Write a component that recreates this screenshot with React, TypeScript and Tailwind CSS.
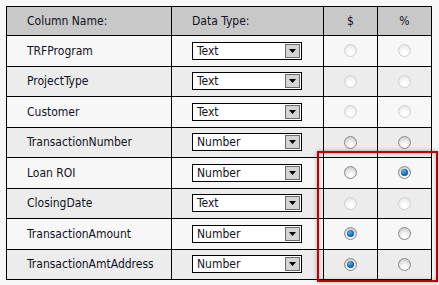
const rows = [
  { name: 'TRFProgram', type: 'Text', dollar: false, pct: false, disabled: true },
  { name: 'ProjectType', type: 'Text', dollar: false, pct: false, disabled: true },
  { name: 'Customer', type: 'Text', dollar: false, pct: false, disabled: true },
  { name: 'TransactionNumber', type: 'Number', dollar: false, pct: false, disabled: false },
  { name: 'Loan ROI', type: 'Number', dollar: false, pct: true, disabled: false },
  { name: 'ClosingDate', type: 'Text', dollar: false, pct: false, disabled: true },
  { name: 'TransactionAmount', type: 'Number', dollar: true, pct: false, disabled: false },
  { name: 'TransactionAmtAddress', type: 'Number', dollar: true, pct: false, disabled: false },
];

const Radio = ({ checked, disabled }: { checked: boolean; disabled: boolean }) => {
  if (disabled) {
    return (
      <span className="inline-flex w-[13px] h-[13px] rounded-full border border-[#d2d2d2] bg-[radial-gradient(circle_at_50%_70%,#ffffff_20%,#e2e2e2_90%)]" />
    );
  }
  return (
    <span className="inline-flex items-center justify-center w-[13px] h-[13px] rounded-full border border-[#8a8a8a] bg-[radial-gradient(circle_at_50%_75%,#ffffff_15%,#cdcdcd_85%)]">
      {checked && (
        <span className="w-[7px] h-[7px] rounded-full bg-[radial-gradient(circle_at_40%_35%,#5fb6ee_0%,#1b6db5_50%,#0b3c72_100%)]" />
      )}
    </span>
  );
};

const Select = ({ value }: { value: string }) => (
  <div className="flex items-center w-[110px] h-[18px] border border-black bg-white">
    <span className="flex-1 pl-[4px] leading-none">{value}</span>
    <span className="w-[15px] h-[14px] mr-[1px] flex items-center justify-center bg-[#d4d4d4] border border-[#6b6b6b]">
      <svg width="7" height="4" viewBox="0 0 7 4"><path d="M0 0h7L3.5 4z" fill="#000" /></svg>
    </span>
  </div>
);

export default function App() {
  return (
    <div className="relative w-[439px] h-[285px] bg-[#f7f7f7] pt-[6px] pl-[6px] text-[#111122] text-[12px]" style={{ fontFamily: '"DejaVu Sans Condensed", "DejaVu Sans", sans-serif' }}>
      <table className="border-collapse w-[425px] table-fixed">
        <colgroup>
          <col className="w-[165px]" />
          <col className="w-[152px]" />
          <col className="w-[54px]" />
          <col className="w-[54px]" />
        </colgroup>
        <thead>
          <tr className="h-[29px] bg-[#c8c8c8]">
            <th className="border border-black text-left font-normal pl-[20px]">Column Name:</th>
            <th className="border border-black text-left font-normal pl-[20px]">Data Type:</th>
            <th className="border border-black font-normal">$</th>
            <th className="border border-black font-normal">%</th>
          </tr>
        </thead>
        <tbody>
          {rows.map((r, i) => (
            <tr key={r.name} className={i % 2 === 0 ? 'h-[30.5px] bg-[#f7f7f7]' : 'h-[30.5px] bg-[#ececec]'}>
              <td className="border border-black pl-[20px]">{r.name}</td>
              <td className="border border-black pl-[20px]"><Select value={r.type} /></td>
              <td className="border border-black text-center align-middle"><div className="flex justify-center"><Radio checked={r.dollar} disabled={r.disabled} /></div></td>
              <td className="border border-black text-center align-middle"><div className="flex justify-center"><Radio checked={r.pct} disabled={r.disabled} /></div></td>
            </tr>
          ))}
        </tbody>
      </table>
      <div className="absolute left-[317px] top-[151px] w-[121px] h-[131px] border-2 border-[#c00000] shadow-[0_0_4px_rgba(0,0,0,0.35),inset_0_0_4px_rgba(0,0,0,0.25)]" />
    </div>
  );
}
